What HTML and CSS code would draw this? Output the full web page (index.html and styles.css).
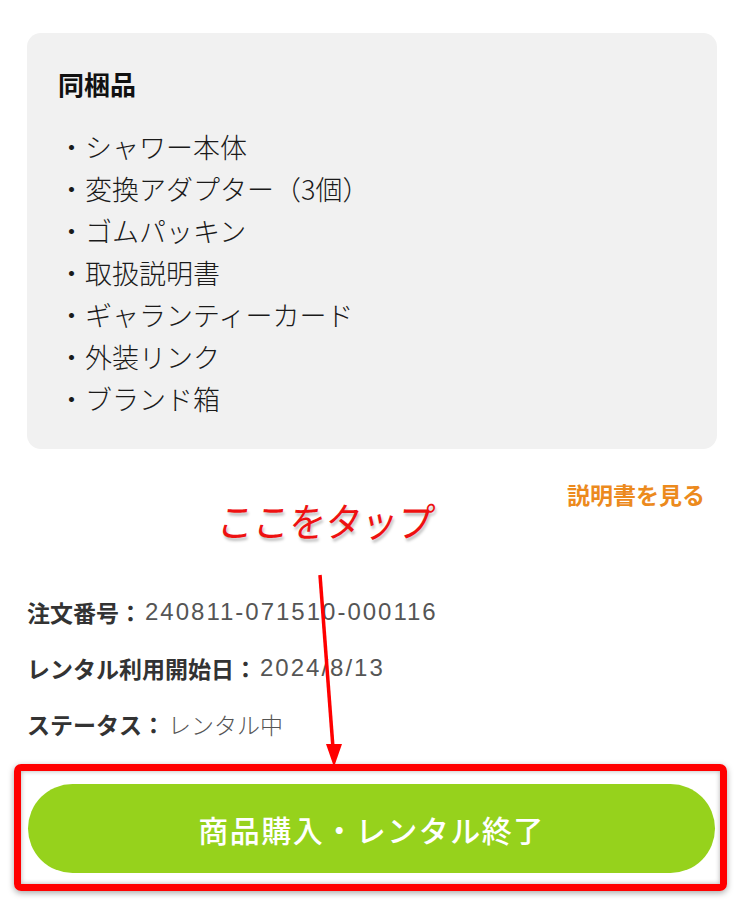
FILE: index.html
```html
<!DOCTYPE html>
<html lang="ja">
  <head>
    <meta charset="UTF-8" />
    <title>レンタル詳細</title>
    <meta name="viewport" content="width=device-width, initial-scale=1.0" />
    <link rel="stylesheet" href="styles.css">
  </head>
  <body>
    <main class="page">
      <!-- 同梱品 -->
      <section class="bundle">
        <h2 class="bundle-title">同梱品</h2>
        <ul class="bundle-list">
          <li>・シャワー本体</li>
          <li>・変換アダプター（3個）</li>
          <li>・ゴムパッキン</li>
          <li>・取扱説明書</li>
          <li>・ギャランティーカード</li>
          <li>・外装リンク</li>
          <li>・ブランド箱</li>
        </ul>
      </section>

      <div class="manual">
        <a href="#" class="manual-link">説明書を見る</a>
      </div>

      <!-- 注文情報 -->
      <dl class="order-info">
        <div class="order-row">
          <dt>注文番号：</dt>
          <dd class="num">240811-071510-000116</dd>
        </div>
        <div class="order-row">
          <dt>レンタル利用開始日：</dt>
          <dd class="num">2024/8/13</dd>
        </div>
        <div class="order-row">
          <dt>ステータス：</dt>
          <dd>レンタル中</dd>
        </div>
      </dl>

      <div class="cta-frame">
        <button type="button" class="cta">商品購入・レンタル終了</button>
      </div>

      <!-- annotation overlay -->
      <p class="note">ここをタップ</p>
      <svg class="note-arrow" width="743" height="902" viewBox="0 0 743 902">
        <line x1="320" y1="575" x2="333" y2="748" stroke="#f00" stroke-width="3.5" />
        <polygon points="326,744 342,744 334,767" fill="#f00" />
      </svg>
    </main>
  </body>
</html>
```

FILE: styles.css
```css
/* General */
body {
  margin: 0;
  background-color: #fff;
  font-family: "Noto Sans CJK JP", "Noto Sans", sans-serif;
  color: #222;
}
.page {
  position: relative;
  width: 743px;
  height: 902px;
  box-sizing: border-box;
  padding: 33px 26px 0 27px;
  overflow: hidden;
}

/* Bundle card */
.bundle {
  background-color: #f1f1f1;
  border-radius: 14px;
  padding: 31px 31px 29px;
}
.bundle-title {
  margin: 0;
  font-size: 26px;
  line-height: 40px;
  font-weight: bold;
  color: #111;
}
.bundle-list {
  list-style: none;
  margin: 22px 0 0;
  padding: 0;
}
.bundle-list li {
  font-size: 27px;
  line-height: 42px;
  font-weight: 300;
  color: #1a1a1a;
}

/* Manual link */
.manual {
  display: flex;
  justify-content: flex-end;
  margin-top: 30px;
  padding-right: 12px;
}
.manual-link {
  font-size: 23px;
  line-height: 30px;
  font-weight: bold;
  color: #ec8a1d;
  text-decoration: none;
}

/* Order info */
.order-info {
  margin: 86px 0 0;
  display: flex;
  flex-direction: column;
  gap: 22px;
}
.order-row {
  display: flex;
  align-items: center;
  height: 34px;
  font-size: 23px;
  line-height: 34px;
}
.order-row dt {
  font-weight: bold;
  color: #333;
}
.order-row dd {
  margin: 0 0 0 3px;
  color: #555;
  font-weight: 300;
}
.order-row .num {
  font-family: "Liberation Sans", "Noto Sans CJK JP", sans-serif;
  font-size: 24px;
  font-weight: normal;
  letter-spacing: 2px;
}

/* Button */
.cta-frame {
  margin: 23px -10px 0 -13px;
  border: 7px solid #ff0000;
  border-radius: 7px;
  padding: 13px 5px 11px 7px;
  box-shadow: 0 2px 6px rgba(0, 0, 0, 0.35), inset 0 0 5px rgba(0, 0, 0, 0.3);
}
.cta {
  display: block;
  width: 100%;
  height: 89px;
  border: none;
  border-radius: 45px;
  background-color: #96d21c;
  color: #fff;
  font-family: inherit;
  font-size: 30px;
  font-weight: 500;
  letter-spacing: 1.5px;
}

/* Annotation */
.note {
  position: absolute;
  left: 218px;
  top: 492px;
  margin: 0;
  font-size: 40px;
  line-height: 56px;
  font-weight: normal;
  color: #ee1111;
  transform: skewX(-7deg) scaleX(0.9);
  transform-origin: left center;
  text-shadow: 2px 3px 3px rgba(0, 0, 0, 0.25);
}
.note-arrow {
  position: absolute;
  left: 0;
  top: 0;
  pointer-events: none;
}
```
